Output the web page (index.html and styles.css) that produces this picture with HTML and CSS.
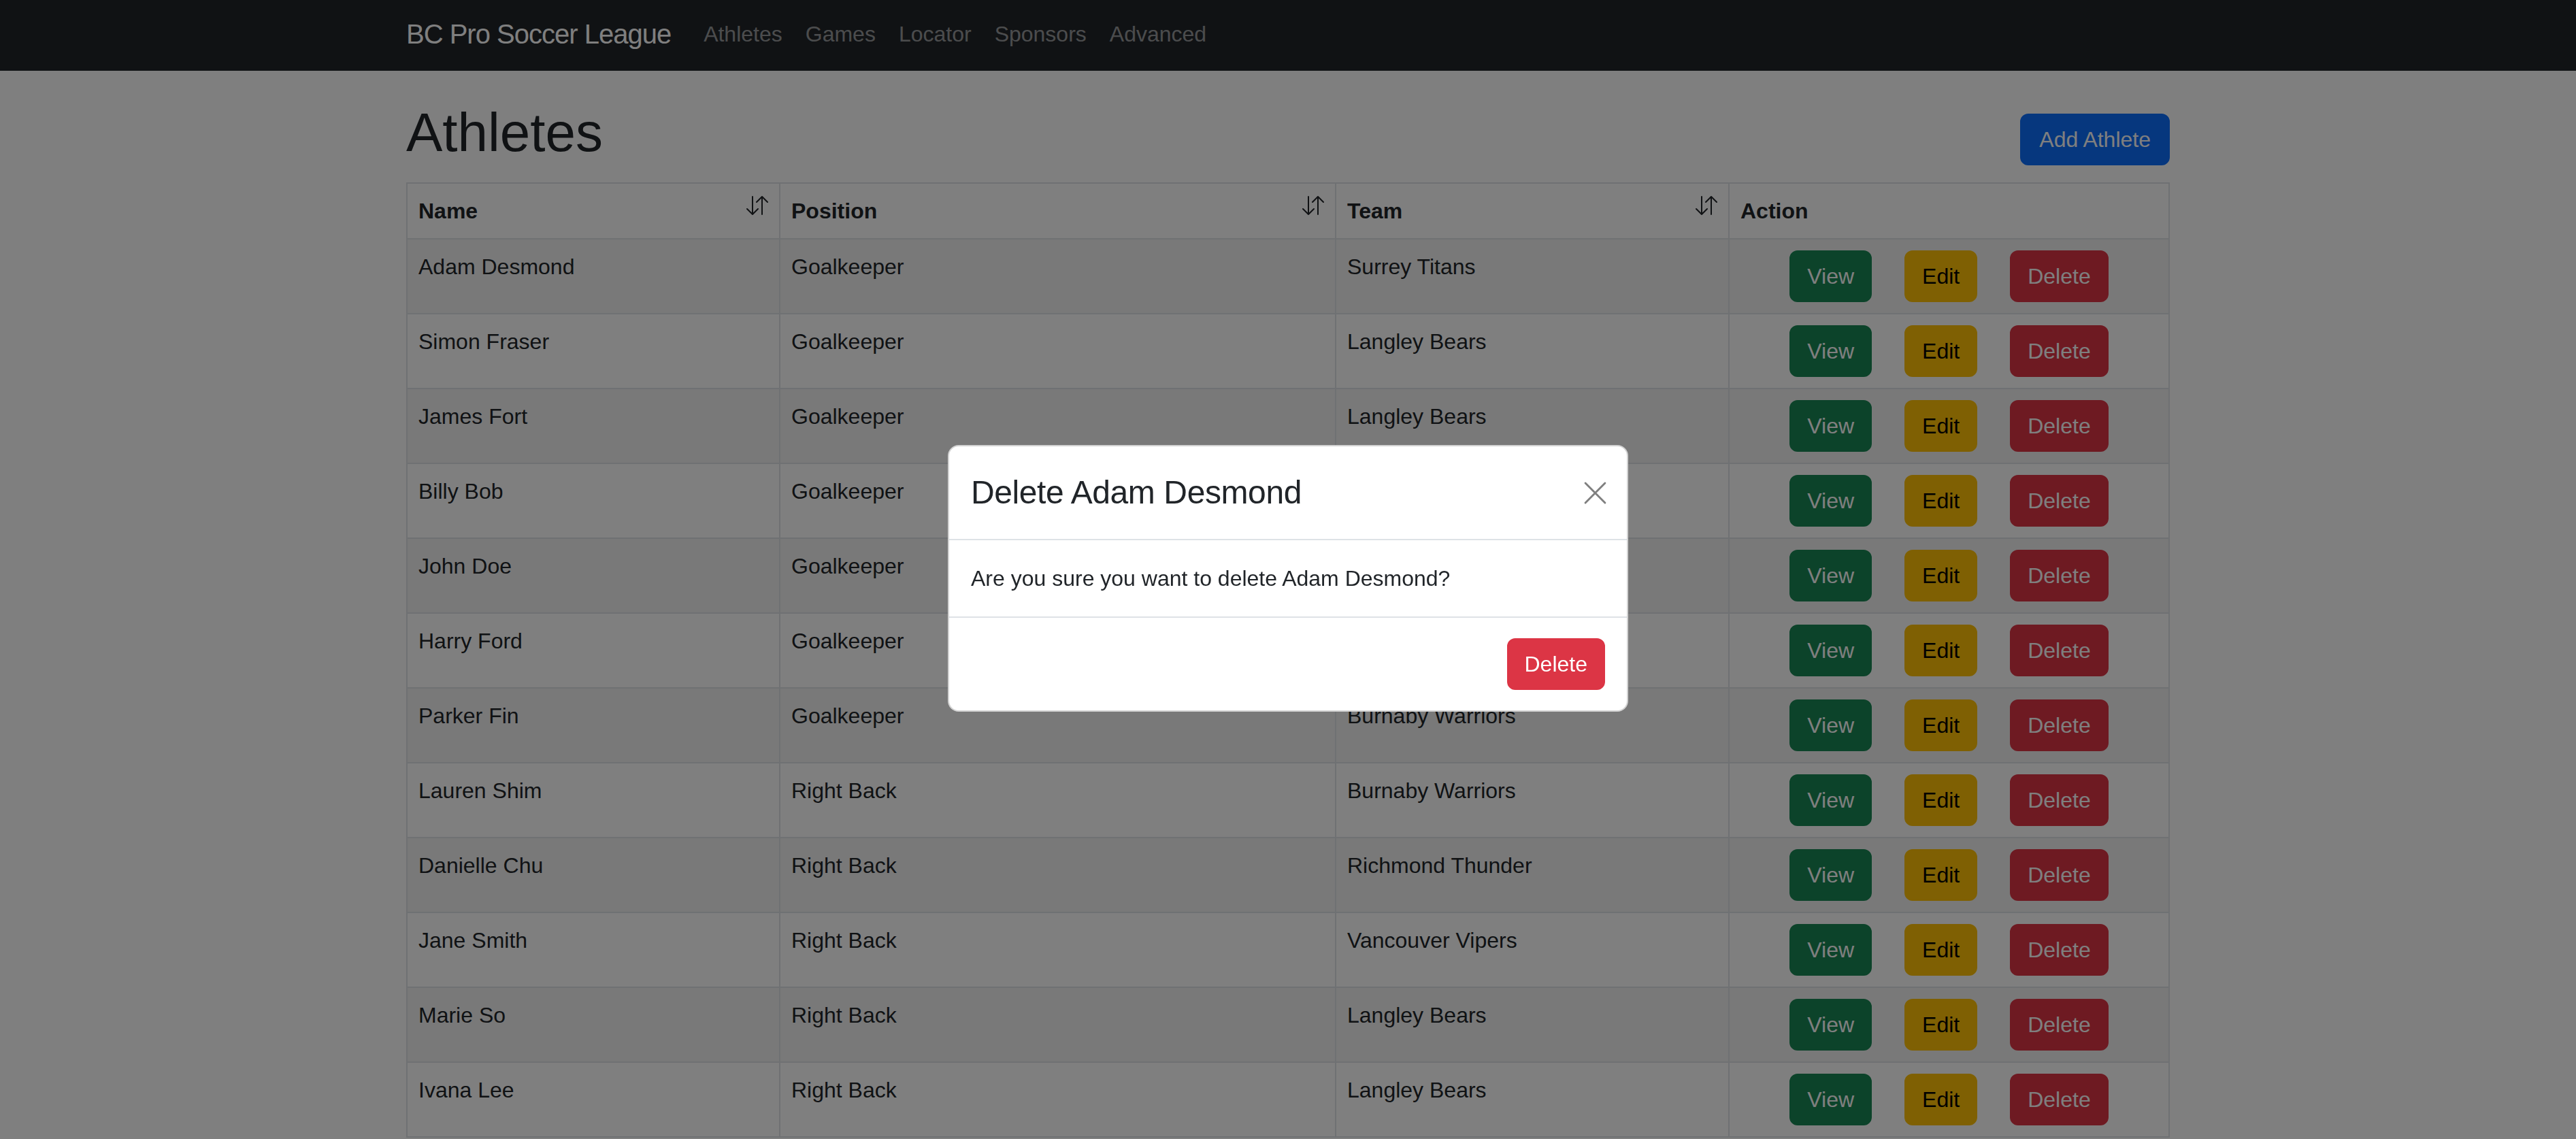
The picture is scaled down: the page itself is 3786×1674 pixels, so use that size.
FILE: index.html
```html
<!DOCTYPE html>
<html lang="en">
<head>
<meta charset="utf-8">
<title>Athletes - BC Pro Soccer League</title>
<link rel="stylesheet" href="styles.css">
</head>
<body>
<nav class="navbar">
  <div class="container nav-inner">
    <a class="brand" href="#">BC Pro Soccer League</a>
    <ul class="nav-links">
      <li><a href="#">Athletes</a></li>
      <li><a href="#">Games</a></li>
      <li><a href="#">Locator</a></li>
      <li><a href="#">Sponsors</a></li>
      <li><a href="#">Advanced</a></li>
    </ul>
  </div>
</nav>

<main class="container">
  <div class="page-head">
    <h1>Athletes</h1>
    <button class="btn btn-primary add-btn">Add Athlete</button>
  </div>

  <table class="table">
    <colgroup>
      <col class="c-name"><col class="c-pos"><col class="c-team"><col>
    </colgroup>
    <thead>
      <tr>
        <th><div class="th-sort"><span>Name</span><svg class="sort-ico" viewBox="0 0 16 16"><path d="M11.5 15a.5.5 0 0 0 .5-.5V2.707l3.146 3.147a.5.5 0 0 0 .708-.708l-4-4a.5.5 0 0 0-.708 0l-4 4a.5.5 0 1 0 .708.708L11 2.707V14.5a.5.5 0 0 0 .5.5m-7-14a.5.5 0 0 1 .5.5v11.793l3.146-3.147a.5.5 0 0 1 .708.708l-4 4a.5.5 0 0 1-.708 0l-4-4a.5.5 0 0 1 .708-.708L4 13.293V1.5a.5.5 0 0 1 .5-.5"/></svg></div></th>
        <th><div class="th-sort"><span>Position</span><svg class="sort-ico" viewBox="0 0 16 16"><path d="M11.5 15a.5.5 0 0 0 .5-.5V2.707l3.146 3.147a.5.5 0 0 0 .708-.708l-4-4a.5.5 0 0 0-.708 0l-4 4a.5.5 0 1 0 .708.708L11 2.707V14.5a.5.5 0 0 0 .5.5m-7-14a.5.5 0 0 1 .5.5v11.793l3.146-3.147a.5.5 0 0 1 .708.708l-4 4a.5.5 0 0 1-.708 0l-4-4a.5.5 0 0 1 .708-.708L4 13.293V1.5a.5.5 0 0 1 .5-.5"/></svg></div></th>
        <th><div class="th-sort"><span>Team</span><svg class="sort-ico" viewBox="0 0 16 16"><path d="M11.5 15a.5.5 0 0 0 .5-.5V2.707l3.146 3.147a.5.5 0 0 0 .708-.708l-4-4a.5.5 0 0 0-.708 0l-4 4a.5.5 0 1 0 .708.708L11 2.707V14.5a.5.5 0 0 0 .5.5m-7-14a.5.5 0 0 1 .5.5v11.793l3.146-3.147a.5.5 0 0 1 .708.708l-4 4a.5.5 0 0 1-.708 0l-4-4a.5.5 0 0 1 .708-.708L4 13.293V1.5a.5.5 0 0 1 .5-.5"/></svg></div></th>
        <th>Action</th>
      </tr>
    </thead>
    <tbody>
      <tr><td>Adam Desmond</td><td>Goalkeeper</td><td>Surrey Titans</td><td><div class="actions"><button class="btn btn-success">View</button><button class="btn btn-warning">Edit</button><button class="btn btn-danger">Delete</button></div></td></tr>
      <tr><td>Simon Fraser</td><td>Goalkeeper</td><td>Langley Bears</td><td><div class="actions"><button class="btn btn-success">View</button><button class="btn btn-warning">Edit</button><button class="btn btn-danger">Delete</button></div></td></tr>
      <tr><td>James Fort</td><td>Goalkeeper</td><td>Langley Bears</td><td><div class="actions"><button class="btn btn-success">View</button><button class="btn btn-warning">Edit</button><button class="btn btn-danger">Delete</button></div></td></tr>
      <tr><td>Billy Bob</td><td>Goalkeeper</td><td>Surrey Titans</td><td><div class="actions"><button class="btn btn-success">View</button><button class="btn btn-warning">Edit</button><button class="btn btn-danger">Delete</button></div></td></tr>
      <tr><td>John Doe</td><td>Goalkeeper</td><td>Richmond Thunder</td><td><div class="actions"><button class="btn btn-success">View</button><button class="btn btn-warning">Edit</button><button class="btn btn-danger">Delete</button></div></td></tr>
      <tr><td>Harry Ford</td><td>Goalkeeper</td><td>Vancouver Vipers</td><td><div class="actions"><button class="btn btn-success">View</button><button class="btn btn-warning">Edit</button><button class="btn btn-danger">Delete</button></div></td></tr>
      <tr><td>Parker Fin</td><td>Goalkeeper</td><td>Burnaby Warriors</td><td><div class="actions"><button class="btn btn-success">View</button><button class="btn btn-warning">Edit</button><button class="btn btn-danger">Delete</button></div></td></tr>
      <tr><td>Lauren Shim</td><td>Right Back</td><td>Burnaby Warriors</td><td><div class="actions"><button class="btn btn-success">View</button><button class="btn btn-warning">Edit</button><button class="btn btn-danger">Delete</button></div></td></tr>
      <tr><td>Danielle Chu</td><td>Right Back</td><td>Richmond Thunder</td><td><div class="actions"><button class="btn btn-success">View</button><button class="btn btn-warning">Edit</button><button class="btn btn-danger">Delete</button></div></td></tr>
      <tr><td>Jane Smith</td><td>Right Back</td><td>Vancouver Vipers</td><td><div class="actions"><button class="btn btn-success">View</button><button class="btn btn-warning">Edit</button><button class="btn btn-danger">Delete</button></div></td></tr>
      <tr><td>Marie So</td><td>Right Back</td><td>Langley Bears</td><td><div class="actions"><button class="btn btn-success">View</button><button class="btn btn-warning">Edit</button><button class="btn btn-danger">Delete</button></div></td></tr>
      <tr><td>Ivana Lee</td><td>Right Back</td><td>Langley Bears</td><td><div class="actions"><button class="btn btn-success">View</button><button class="btn btn-warning">Edit</button><button class="btn btn-danger">Delete</button></div></td></tr>
    </tbody>
  </table>
</main>

<div class="backdrop"></div>

<div class="modal" role="dialog" aria-modal="true">
  <div class="modal-header">
    <h4 class="modal-title">Delete Adam Desmond</h4>
    <button class="btn-close" aria-label="Close">
      <svg viewBox="0 0 16 16"><path d="M1 1 15 15M15 1 1 15"/></svg>
    </button>
  </div>
  <div class="modal-body">Are you sure you want to delete Adam Desmond?</div>
  <div class="modal-footer">
    <button class="btn btn-danger modal-btn">Delete</button>
  </div>
</div>
</body>
</html>
```

FILE: styles.css
```css
html, body {
  margin: 0;
  padding: 0;
  overflow: hidden;
}

body {
  font-family: "Liberation Sans", Arial, sans-serif;
  font-size: 32px;
  line-height: 48px;
  color: #212529;
  background: #ffffff;
}

.container {
  width: 2592px;
  margin: 0 auto;
}

/* Navbar */
.navbar {
  background: #212529;
  height: 104px;
}

.nav-inner {
  height: 104px;
  box-sizing: border-box;
  padding-bottom: 5px;
  display: flex;
  align-items: center;
}

.brand {
  font-size: 40px;
  line-height: 60px;
  color: #ffffff;
  text-decoration: none;
  letter-spacing: -1px;
  margin-right: 31px;
}

.nav-links {
  list-style: none;
  margin: 0;
  padding: 0;
  display: flex;
}

.nav-links a {
  display: block;
  padding: 0 17px;
  font-size: 32px;
  line-height: 48px;
  color: rgba(255, 255, 255, 0.55);
  text-decoration: none;
}

/* Page head */
.page-head {
  display: flex;
  justify-content: space-between;
  align-items: flex-end;
  padding-top: 43px;
  margin-bottom: 25px;
}

.page-head h1 {
  margin: 0;
  font-size: 80px;
  line-height: 96px;
  font-weight: 500;
}

/* Buttons */
.btn {
  font-family: "Liberation Sans", Arial, sans-serif;
  font-size: 32px;
  line-height: 48px;
  padding: 12px 24px;
  border: 2px solid transparent;
  border-radius: 12px;
  color: #ffffff;
  cursor: pointer;
  margin: 0;
}

.add-btn {
  padding: 12px 26px;
}

.btn-primary { background: #0d6efd; border-color: #0d6efd; }
.btn-success { background: #198754; border-color: #198754; }
.btn-warning { background: #ffc107; border-color: #ffc107; color: #000000; }
.btn-danger  { background: #dc3545; border-color: #dc3545; }

/* Table */
.table {
  width: 2592px;
  table-layout: fixed;
  border-collapse: separate;
  border-spacing: 0;
  border-top: 2px solid #dee2e6;
  border-left: 2px solid #dee2e6;
}

.c-name { width: 548px; }
.c-pos  { width: 817px; }
.c-team { width: 578px; }

.table th,
.table td {
  padding: 16px;
  border-right: 2px solid #dee2e6;
  border-bottom: 2px solid #dee2e6;
  vertical-align: top;
  text-align: left;
}

.table th {
  font-weight: 700;
}

.table tbody tr:nth-child(odd) td {
  background: #f2f2f2;
}

.th-sort {
  display: flex;
  justify-content: space-between;
  align-items: flex-start;
}

.sort-ico {
  width: 32px;
  height: 32px;
  fill: #212529;
  flex: none;
}

.actions {
  display: flex;
  justify-content: center;
  gap: 48px;
}

/* Modal */
.backdrop {
  position: fixed;
  inset: 0;
  background: rgba(0, 0, 0, 0.5);
}

.modal {
  position: fixed;
  top: 654px;
  left: 1393px;
  width: 1000px;
  box-sizing: border-box;
  background: #ffffff;
  border: 2px solid rgba(0, 0, 0, 0.175);
  border-radius: 16px;
}

.modal-header {
  display: flex;
  align-items: center;
  padding: 32px;
  border-bottom: 2px solid #dee2e6;
}

.modal-title {
  margin: 0;
  font-size: 48px;
  line-height: 72px;
  font-weight: 500;
  letter-spacing: -0.4px;
}

.btn-close {
  margin-left: auto;
  width: 33px;
  height: 33px;
  padding: 0;
  border: 0;
  background: transparent;
  display: flex;
  margin-right: -2px;
}

.btn-close svg {
  width: 33px;
  height: 33px;
  stroke: rgba(0, 0, 0, 0.5);
  stroke-width: 1.4;
  stroke-linecap: round;
  fill: none;
}

.modal-body {
  padding: 32px;
}

.modal-footer {
  display: flex;
  justify-content: flex-end;
  padding: 22px 24px;
  border-top: 2px solid #dee2e6;
}

.modal-btn {
  margin: 8px;
}
```
